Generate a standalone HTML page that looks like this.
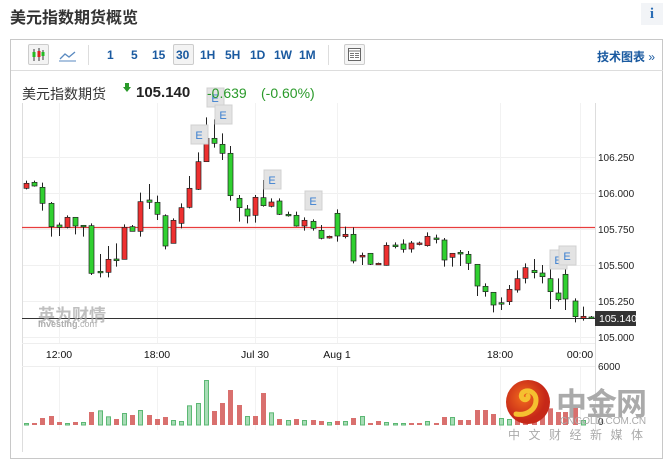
<!DOCTYPE html>
<html><head><meta charset="utf-8"><style>
*{margin:0;padding:0;box-sizing:border-box}
body{width:663px;height:452px;overflow:hidden;background:#fff;font-family:"Liberation Sans","Noto Sans CJK SC",sans-serif;position:relative}
.a{position:absolute;white-space:nowrap}
.z{z-index:5}
.tb{color:#1a5aa0;font-weight:bold;font-size:12px;top:48px}
</style></head><body>
<div class="a" style="left:10px;top:4px;font-size:16px;font-weight:bold;color:#333">美元指数期货概览</div>
<div class="a" style="left:641px;top:3px;width:22px;height:22px;background:#f2f4f7;color:#2a6db5;font:bold 15px 'Liberation Serif',serif;text-align:center;line-height:22px">i</div>
<div class="a" style="left:10px;top:39px;width:653px;height:420px;border:1px solid #c8c8c8"></div>
<div class="a" style="left:11px;top:70px;width:652px;height:1px;background:#ddd"></div>
<div class="a" style="left:28px;top:44px;width:21px;height:21px;border:1px solid #ccc;border-radius:2px;background:#f3f3f3"></div>
<svg class="a" style="left:28px;top:44px" width="22" height="22"><path d="M6 5v12M11 4v13M15 6v10" stroke="#333"/><rect x="4.5" y="8" width="3" height="5" fill="#2b2"/><rect x="9.5" y="7" width="3" height="6" fill="#d22"/><rect x="13.5" y="8" width="3" height="4" fill="#2b2"/></svg>
<svg class="a" style="left:58px;top:46px" width="20" height="18"><path d="M2 13l5-5 4 3 6-5" fill="none" stroke="#5a8ac0" stroke-width="1.3"/><path d="M1 15h17" stroke="#5a8ac0"/></svg>
<div class="a" style="left:88px;top:45px;width:1px;height:20px;background:#ddd"></div>
<div class="a tb" style="left:107px">1</div>
<div class="a tb" style="left:131px">5</div>
<div class="a" style="left:173px;top:44px;width:21px;height:21px;border:1px solid #ccc;border-radius:2px;background:#f3f3f3"></div>
<div class="a tb" style="left:152px">15</div>
<div class="a tb" style="left:176px">30</div>
<div class="a tb" style="left:200px">1H</div>
<div class="a tb" style="left:225px">5H</div>
<div class="a tb" style="left:250px">1D</div>
<div class="a tb" style="left:274px">1W</div>
<div class="a tb" style="left:299px">1M</div>
<div class="a" style="left:328px;top:45px;width:1px;height:20px;background:#ddd"></div>
<div class="a" style="left:344px;top:44px;width:21px;height:21px;border:1px solid #ccc;border-radius:2px;background:#f5f5f5"></div>
<svg class="a" style="left:344px;top:44px" width="21" height="21"><rect x="4.5" y="4.5" width="12" height="12" fill="#fff" stroke="#666"/><path d="M5 7h11M6 9.5h4M6 11.5h4M6 13.5h4M11 9.5h4M11 11.5h4M11 13.5h4" stroke="#777"/></svg>
<div class="a" style="left:597px;top:48px;font-size:12px;font-weight:bold;color:#1a5aa0">技术图表 <span style="font-weight:normal">»</span></div>
<svg id="ch" class="a" style="left:0;top:0" width="663" height="452"></svg>
<div class="a z" style="left:22px;top:84px;font-size:14px;color:#333">美元指数期货</div>
<svg class="a z" style="left:123px;top:83px" width="8" height="9"><path d="M2 0h4v4h2L4 9 0 4h2z" fill="#2a9a2a"/></svg>
<div class="a z" style="left:136px;top:84px;font-size:15px;font-weight:bold;color:#222">105.140</div>
<div class="a z" style="left:207px;top:85px;font-size:14px;color:#2a9a2a">-0.639</div>
<div class="a z" style="left:261px;top:85px;font-size:14px;color:#2a9a2a">(-0.60%)</div>
<div class="a" style="left:38px;top:301px;font-size:17px;font-weight:bold;color:#aaa;opacity:.75">英为财情</div>
<div class="a" style="left:38px;top:319px;font-size:9px;font-weight:bold;color:#999;opacity:.8">Investing<span style="font-weight:normal">.com</span></div>
<svg class="a" style="left:506px;top:380px" width="44" height="44"><defs><radialGradient id="g" cx="40%" cy="40%"><stop offset="0" stop-color="#f26a1e"/><stop offset="1" stop-color="#c62818"/></radialGradient></defs><circle cx="22" cy="22" r="22" fill="url(#g)"/><path d="M10 34c10 2 20-4 20-14 0-6-5-10-10-9-5 1-6 6-3 8 3 2 6-1 5-3" fill="none" stroke="#f5c030" stroke-width="5" stroke-linecap="round"/></svg>
<div class="a" style="left:556px;top:379px;font-size:31px;font-weight:bold;color:#aaa;letter-spacing:-1px">中金网</div>
<div class="a" style="left:560px;top:416px;font-size:10px;color:#aaa">CNGOLD.COM.CN</div>
<div class="a" style="left:508px;top:426px;font-size:12px;color:#aaa;letter-spacing:8.5px">中文财经新媒体</div>
<script>
var s='';
function L(x1,y1,x2,y2,c,w){s+='<line x1="'+x1+'" y1="'+y1+'" x2="'+x2+'" y2="'+y2+'" stroke="'+c+'" stroke-width="'+(w||1)+'"/>';}
function T(x,y,t,o){s+='<text x="'+x+'" y="'+y+'" '+(o||'')+'>'+t+'</text>';}
[157,193,229,265,301,337].forEach(function(y){L(22,y+.5,595,y+.5,'#f0f0f0');});
[59,157,255,337,500,580].forEach(function(x){L(x+.5,103,x+.5,343,'#f2f2f2');L(x+.5,366,x+.5,430,'#f2f2f2');});
L(22.5,103,22.5,452,'#ddd');L(595.5,103,595.5,430,'#ddd');L(22,343.5,595,343.5,'#eee');L(22,366.5,595,366.5,'#eee');
var lab=[[157,'106.250'],[193,'106.000'],[229,'105.750'],[265,'105.500'],[301,'105.250'],[337,'105.000']];
lab.forEach(function(l){T(598,l[0]+4,l[1],'font-size="10" fill="#222"');});
[[59,'12:00'],[157,'18:00'],[255,'Jul 30'],[337,'Aug 1'],[500,'18:00'],[580,'00:00']].forEach(function(l){T(l[0],358,l[1],'font-size="10.5" fill="#111" text-anchor="middle"');});
T(598,370,'6000','font-size="10" fill="#222"');T(598,425,'0','font-size="10" fill="#222"');
L(22,227.5,595,227.5,'#e83c3c',1.2);
L(22,318.5,595,318.5,'#333');
s+='<rect x="595" y="311" width="41" height="15" fill="#333"/>';T(599,322,'105.140','font-size="10.5" fill="#fff"');
var c=[[62,220,235,212,238,'r'],[81,217,228,212,230,'g'],[100,232,280,218,302,'g'],[121,280,350,276,380,'g'],[140,345,352,338,378,'g'],[159,322,352,316,355,'r'],[178,322,348,322,373,'g'],[197,346,349,345,380,'g'],[215,347,490,340,495,'g'],[237,484,487,432,502,'g'],[256,448,487,408,502,'r'],[275,447,452,400,470,'g'],[294,352,448,343,448,'r'],[313,350,364,345,364,'g'],[332,275,364,248,380,'r'],[352,270,277,222,297,'g'],[371,277,313,257,330,'g'],[390,317,408,313,418,'g'],[409,331,400,325,400,'r'],[429,293,340,280,355,'r'],[448,235,292,198,295,'r'],[468,155,238,127,240,'r'],[487,85,155,22,155,'r'],[506,85,100,28,113,'g'],[525,103,130,70,150,'g'],[545,130,257,108,272,'g'],[566,265,293,255,335,'g'],[585,297,318,285,340,'g'],[604,262,316,255,338,'r'],[623,263,287,210,290,'g'],[642,276,289,265,292,'r'],[661,273,313,265,315,'g'],[681,313,314,305,320,'g'],[700,316,348,305,350,'g'],[720,331,348,322,362,'r'],[740,334,355,328,362,'g'],[758,361,385,345,388,'g'],[777,379,384,377,386,'r'],[797,310,378,298,395,'g'],[816,373,380,350,385,'r'],[836,373,453,352,460,'g'],[855,436,441,428,465,'r'],[874,430,463,430,465,'g'],[893,460,463,458,465,'r'],[913,406,466,397,467,'r'],[933,405,410,397,415,'g'],[952,402,418,388,428,'g'],[971,399,417,393,428,'r'],[990,399,403,395,406,'r'],[1009,379,407,367,410,'r'],[1030,384,387,374,400,'g'],[1049,390,450,384,470,'g'],[1068,430,442,430,470,'r'],[1088,427,432,420,468,'g'],[1107,433,460,423,480,'g'],[1128,463,528,463,558,'g'],[1146,529,545,520,560,'g'],[1165,547,585,547,607,'g'],[1184,578,582,562,600,'g'],[1203,538,575,525,585,'r'],[1222,506,540,481,548,'r'],[1242,473,505,460,520,'r'],[1262,481,488,447,505,'g'],[1281,489,500,465,520,'g'],[1300,506,545,470,597,'g'],[1319,549,569,505,575,'g'],[1337,493,567,463,600,'g'],[1359,573,620,565,637,'g'],[1378,619,625,590,632,'r'],[1397,621,624,618,625,'g']];
var k=2.365;
c.forEach(function(d){var x=Math.round(d[0]/k)+.5,t=d[1]/3+110,b=d[2]/3+110;L(x,d[3]/3+110,x,d[4]/3+110,'#222');
var h=Math.max(b-t,1.5);s+='<rect x="'+(x-2.5)+'" y="'+t+'" width="5" height="'+h+'" fill="'+(d[5]=='r'?'#ee3030':'#30d030')+'" stroke="#222" stroke-width="0.7"/>';});
var v=[[62,279,'g'],[81,279,'r'],[100,264,'r'],[121,258,'r'],[140,276,'r'],[159,279,'g'],[178,276,'r'],[197,276,'g'],[215,246,'r'],[237,241,'g'],[256,259,'g'],[275,267,'r'],[294,249,'g'],[313,255,'r'],[332,240,'g'],[352,255,'r'],[371,267,'r'],[390,261,'r'],[409,270,'g'],[429,273,'g'],[448,226,'g'],[468,219,'g'],[487,150,'g'],[506,243,'r'],[525,219,'r'],[545,180,'r'],[566,225,'r'],[585,258,'g'],[604,258,'r'],[623,189,'r'],[642,247,'g'],[661,267,'r'],[681,270,'g'],[700,267,'r'],[720,270,'g'],[740,270,'r'],[758,273,'r'],[777,276,'g'],[797,273,'r'],[816,273,'g'],[836,264,'r'],[855,258,'g'],[874,279,'r'],[893,273,'r'],[913,276,'g'],[933,279,'g'],[952,279,'g'],[971,279,'r'],[990,279,'r'],[1009,273,'g'],[1030,279,'r'],[1049,261,'r'],[1068,261,'g'],[1088,270,'r'],[1107,270,'r'],[1128,240,'r'],[1146,240,'r'],[1165,252,'r'],[1184,264,'g'],[1203,267,'g'],[1222,258,'r'],[1242,255,'r'],[1262,255,'r'],[1281,240,'r'],[1300,235,'r'],[1319,246,'r'],[1337,246,'r'],[1359,234,'r'],[1378,270,'g']];
v.forEach(function(d){var x=Math.round(d[0]/k),t=d[1]/3+330,b=425;
if(d[2]=='g')s+='<rect x="'+(x-1.5)+'" y="'+(t+.5)+'" width="4" height="'+(b-t-.5)+'" fill="#a8dcb6" stroke="#5cb874" stroke-width="1"/>';
else s+='<rect x="'+(x-2)+'" y="'+t+'" width="5" height="'+(b-t)+'" fill="#d9706e"/>';});
[[199,135],[215,98],[223,115],[272,180],[313,201],[558,260],[567,256]].forEach(function(e){s+='<rect x="'+(e[0]-8)+'" y="'+(e[1]-10)+'" width="17" height="19" fill="#e3e3e3" stroke="#d0d0d0"/>';T(e[0],e[1]+4,'E','font-size="11" fill="#3a7fd0" text-anchor="middle"');});
document.getElementById('ch').innerHTML=s;
</script>
</body></html>
